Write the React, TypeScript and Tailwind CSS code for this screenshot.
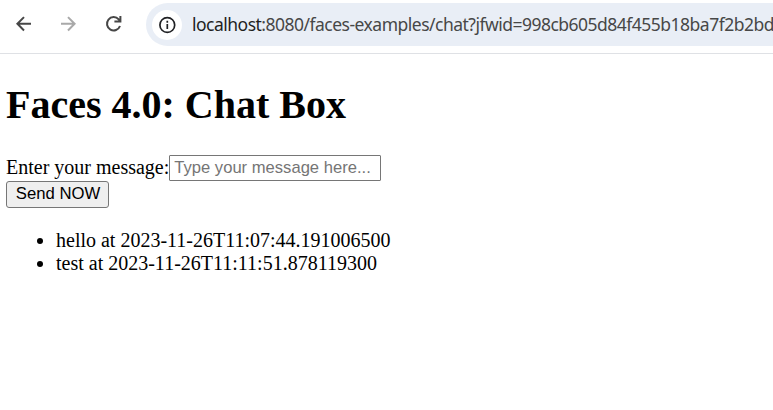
export default function App() {
  return (
    <div className="h-[410px] w-[773px] overflow-hidden bg-white font-['Liberation_Serif',serif] text-black">
      <header className="flex h-[54px] items-start border-b border-[#dfe1e5] pt-[3px]">
        <div className="flex h-[43px] w-[146px] shrink-0 items-start gap-[25px] pl-[14px] pt-[11px]">
          <svg width="20" height="20" viewBox="0 0 20 20" fill="none" stroke="#474747" strokeWidth="2"><path d="M17 9.8H3.6M10 3.1L3.4 9.8l6.6 6.7" /></svg>
          <svg width="20" height="20" viewBox="0 0 20 20" fill="none" stroke="#a9a9a9" strokeWidth="2"><path d="M2 9.8h13.4M9 3.1l6.6 6.7L9 16.5" /></svg>
          <svg width="20" height="20" viewBox="0 0 20 20" fill="none" stroke="#474747" strokeWidth="2"><path d="M16 12a6.7 6.7 0 1 1-1.3-6.7L16.4 7M16.4 2v5.6h-6" /></svg>
        </div>
        <div className="flex h-[43px] flex-1 items-center overflow-hidden rounded-l-full bg-[#e9eef6] pl-[6px]">
          <div className="flex size-[30px] shrink-0 items-center justify-center rounded-full bg-white">
            <svg width="18" height="18" viewBox="0 0 18 18" fill="none" stroke="#202124" strokeWidth="1.7"><circle cx="9.3" cy="9" r="7.4" /><path d="M9.3 8v5M9.3 4.8v1.9" /></svg>
          </div>
          <span className="ml-[10px] whitespace-nowrap font-['Noto_Sans',sans-serif] text-[17.5px] tracking-[-0.51px] text-[#474747]"><span className="text-[#1f1f1f]">localhost</span>:8080/faces-examples/chat?jfwid=998cb605d84f455b18ba7f2b2bd</span>
        </div>
      </header>
      <main className="px-[6px] pt-[28px] text-[20px] leading-[23px]">
        <h1 className="text-[40px] font-bold leading-[46px]">Faces 4.0: Chat Box</h1>
        <form className="mt-[27px]">
          <div className="flex h-[26px] items-start">
            <label htmlFor="message" className="pt-px">Enter your message:</label>
            <input id="message" placeholder="Type your message here..." className="h-[26px] w-[212px] rounded-[1px] border border-[#767676] px-[4px] font-['Liberation_Sans',sans-serif] text-[16.6px] placeholder:text-[#757575]" />
          </div>
          <button type="button" className="block h-[27px] w-[103px] rounded-[3px] border border-[#767676] bg-[#efefef] pb-[2px] pl-px font-['Liberation_Sans',sans-serif] text-[16.7px] leading-[23px]">Send NOW</button>
        </form>
        <ul className="mt-[21px] list-disc pl-[50px]">
          <li>hello at 2023-11-26T11:07:44.191006500</li>
          <li>test at 2023-11-26T11:11:51.878119300</li>
        </ul>
      </main>
    </div>
  );
}
